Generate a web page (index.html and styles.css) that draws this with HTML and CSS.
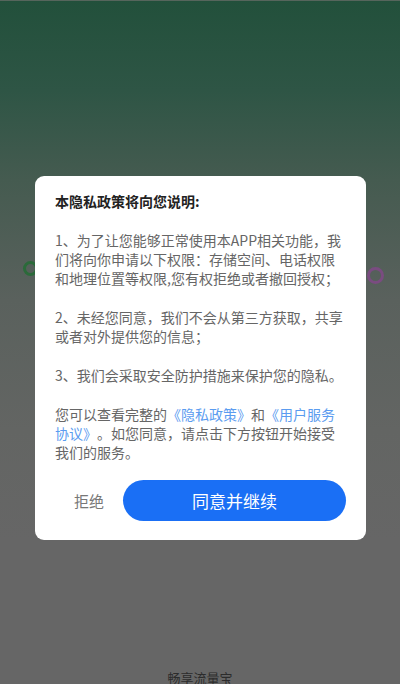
FILE: index.html
```html
<!DOCTYPE html>
<html lang="zh-CN">
<head>
<meta charset="utf-8">
<title>隐私政策</title>
<link rel="stylesheet" href="styles.css">
</head>
<body>
<div class="screen">
  <span class="ring ring-green"></span>
  <span class="ring ring-purple"></span>
  <div class="dialog">
    <p class="title">本隐私政策将向您说明:</p>
    <p class="para">1、为了让您能够正常使用本APP相关功能，我们将向你申请以下权限：存储空间、电话权限和地理位置等权限,您有权拒绝或者撤回授权；</p>
    <p class="para">2、未经您同意，我们不会从第三方获取，共享或者对外提供您的信息；</p>
    <p class="para">3、我们会采取安全防护措施来保护您的隐私。</p>
    <p class="para">您可以查看完整的<span class="link">《隐私政策》</span>和<span class="link">《用户服务协议》</span>。如您同意，请点击下方按钮开始接受我们的服务。</p>
    <div class="actions">
      <div class="reject">拒绝</div>
      <div class="agree">同意并继续</div>
    </div>
  </div>
  <div class="footer">畅享流量宝</div>
</div>
</body>
</html>
```

FILE: styles.css
```css
html, body {
  margin: 0;
  padding: 0;
}
body {
  width: 400px;
  height: 684px;
  overflow: hidden;
  font-family: "Noto Sans CJK SC", "Noto Sans", sans-serif;
  text-spacing-trim: space-all;
  font-kerning: none;
}
.screen {
  position: relative;
  width: 400px;
  height: 684px;
  overflow: hidden;
  display: flex;
  flex-direction: column;
  background: linear-gradient(to bottom,
    #22503b 0px,
    #2e5545 90px,
    #455b50 180px,
    #5a615d 300px,
    #636563 430px,
    #666666 540px,
    #666666 684px);
  box-shadow: inset 0 1px 0 #56655c;
}
.ring {
  position: absolute;
  border-radius: 50%;
  box-sizing: border-box;
  border: 3px solid;
}
.ring-green {
  left: 23px;
  top: 261px;
  width: 15px;
  height: 15px;
  border-color: #2b6a3a;
}
.ring-purple {
  left: 367px;
  top: 267px;
  width: 17px;
  height: 17px;
  border-color: #7a4c80;
}
.dialog {
  position: relative;
  z-index: 1;
  margin: 176px 0 0 35px;
  width: 331px;
  box-sizing: border-box;
  padding: 16px 20px 19px 20px;
  background: #ffffff;
  border-radius: 9px;
}
.title {
  margin: 0;
  font-size: 14px;
  line-height: 19px;
  font-weight: bold;
  color: #222222;
}
.para {
  margin: 20px 0 0 0;
  font-size: 14px;
  line-height: 19px;
  color: #666666;
}
.link {
  color: #5b9cf0;
}
.actions {
  display: flex;
  align-items: center;
  margin-top: 18px;
}
.reject {
  flex: 0 0 68px;
  text-align: center;
  font-size: 15px;
  color: #777777;
}
.agree {
  flex: 1;
  height: 41px;
  border-radius: 21px;
  background: #1a6ff5;
  color: #ffffff;
  font-size: 17px;
  display: flex;
  align-items: center;
  justify-content: center;
}
.footer {
  margin-top: auto;
  margin-bottom: -4px;
  height: 20px;
  line-height: 20px;
  text-align: center;
  font-size: 13px;
  color: #2c2c2c;
}
```
